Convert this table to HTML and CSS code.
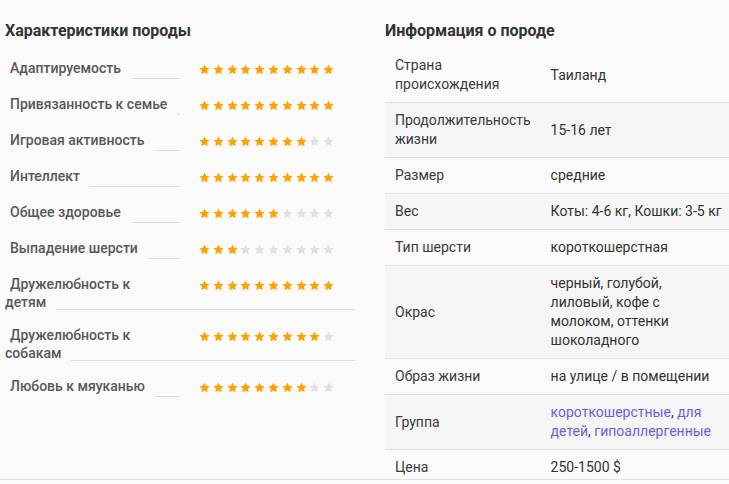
FILE: index.html
```html
<!DOCTYPE html>
<html lang="ru">
<head>
<meta charset="utf-8">
<link rel="stylesheet" href="styles.css">
</head>
<body>
<svg class="defs" width="0" height="0">
  <symbol id="star" viewBox="0 0 24 24"><path d="M12 .9l3.4 7.1 7.8 1-5.7 5.4 1.4 7.7L12 18.4l-6.9 3.7 1.4-7.7L.8 9l7.8-1z"/></symbol>
</svg>
<div class="page">
  <section class="traits">
    <h2 class="title">Характеристики породы</h2>
    <div class="row">
      <div class="stars"><svg class="on"><use href="#star"/></svg><svg class="on"><use href="#star"/></svg><svg class="on"><use href="#star"/></svg><svg class="on"><use href="#star"/></svg><svg class="on"><use href="#star"/></svg><svg class="on"><use href="#star"/></svg><svg class="on"><use href="#star"/></svg><svg class="on"><use href="#star"/></svg><svg class="on"><use href="#star"/></svg><svg class="on"><use href="#star"/></svg></div>
      <span class="name">Адаптируемость</span>
    </div>
    <div class="row">
      <div class="stars"><svg class="on"><use href="#star"/></svg><svg class="on"><use href="#star"/></svg><svg class="on"><use href="#star"/></svg><svg class="on"><use href="#star"/></svg><svg class="on"><use href="#star"/></svg><svg class="on"><use href="#star"/></svg><svg class="on"><use href="#star"/></svg><svg class="on"><use href="#star"/></svg><svg class="on"><use href="#star"/></svg><svg class="on"><use href="#star"/></svg></div>
      <span class="name">Привязанность к семье</span>
    </div>
    <div class="row">
      <div class="stars"><svg class="on"><use href="#star"/></svg><svg class="on"><use href="#star"/></svg><svg class="on"><use href="#star"/></svg><svg class="on"><use href="#star"/></svg><svg class="on"><use href="#star"/></svg><svg class="on"><use href="#star"/></svg><svg class="on"><use href="#star"/></svg><svg class="on"><use href="#star"/></svg><svg class="off"><use href="#star"/></svg><svg class="off"><use href="#star"/></svg></div>
      <span class="name">Игровая активность</span>
    </div>
    <div class="row">
      <div class="stars"><svg class="on"><use href="#star"/></svg><svg class="on"><use href="#star"/></svg><svg class="on"><use href="#star"/></svg><svg class="on"><use href="#star"/></svg><svg class="on"><use href="#star"/></svg><svg class="on"><use href="#star"/></svg><svg class="on"><use href="#star"/></svg><svg class="on"><use href="#star"/></svg><svg class="on"><use href="#star"/></svg><svg class="on"><use href="#star"/></svg></div>
      <span class="name">Интеллект</span>
    </div>
    <div class="row">
      <div class="stars"><svg class="on"><use href="#star"/></svg><svg class="on"><use href="#star"/></svg><svg class="on"><use href="#star"/></svg><svg class="on"><use href="#star"/></svg><svg class="on"><use href="#star"/></svg><svg class="on"><use href="#star"/></svg><svg class="off"><use href="#star"/></svg><svg class="off"><use href="#star"/></svg><svg class="off"><use href="#star"/></svg><svg class="off"><use href="#star"/></svg></div>
      <span class="name">Общее здоровье</span>
    </div>
    <div class="row">
      <div class="stars"><svg class="on"><use href="#star"/></svg><svg class="on"><use href="#star"/></svg><svg class="on"><use href="#star"/></svg><svg class="off"><use href="#star"/></svg><svg class="off"><use href="#star"/></svg><svg class="off"><use href="#star"/></svg><svg class="off"><use href="#star"/></svg><svg class="off"><use href="#star"/></svg><svg class="off"><use href="#star"/></svg><svg class="off"><use href="#star"/></svg></div>
      <span class="name">Выпадение шерсти</span>
    </div>
    <div class="row wrap">
      <div class="stars"><svg class="on"><use href="#star"/></svg><svg class="on"><use href="#star"/></svg><svg class="on"><use href="#star"/></svg><svg class="on"><use href="#star"/></svg><svg class="on"><use href="#star"/></svg><svg class="on"><use href="#star"/></svg><svg class="on"><use href="#star"/></svg><svg class="on"><use href="#star"/></svg><svg class="on"><use href="#star"/></svg><svg class="on"><use href="#star"/></svg></div>
      <span class="name">Дружелюбность к детям</span>
    </div>
    <div class="row wrap">
      <div class="stars"><svg class="on"><use href="#star"/></svg><svg class="on"><use href="#star"/></svg><svg class="on"><use href="#star"/></svg><svg class="on"><use href="#star"/></svg><svg class="on"><use href="#star"/></svg><svg class="on"><use href="#star"/></svg><svg class="on"><use href="#star"/></svg><svg class="on"><use href="#star"/></svg><svg class="on"><use href="#star"/></svg><svg class="off"><use href="#star"/></svg></div>
      <span class="name">Дружелюбность к собакам</span>
    </div>
    <div class="row">
      <div class="stars"><svg class="on"><use href="#star"/></svg><svg class="on"><use href="#star"/></svg><svg class="on"><use href="#star"/></svg><svg class="on"><use href="#star"/></svg><svg class="on"><use href="#star"/></svg><svg class="on"><use href="#star"/></svg><svg class="on"><use href="#star"/></svg><svg class="on"><use href="#star"/></svg><svg class="off"><use href="#star"/></svg><svg class="off"><use href="#star"/></svg></div>
      <span class="name">Любовь к мяуканью</span>
    </div>
  </section>
  <section class="info">
    <h2 class="title">Информация о породе</h2>
    <table class="table">
      <tr><td class="key">Страна происхождения</td><td class="val">Таиланд</td></tr>
      <tr class="alt"><td class="key">Продолжительность жизни</td><td class="val">15-16 лет</td></tr>
      <tr><td class="key">Размер</td><td class="val">средние</td></tr>
      <tr class="alt"><td class="key">Вес</td><td class="val nowrap">Коты: 4-6 кг, Кошки: 3-5 кг</td></tr>
      <tr><td class="key">Тип шерсти</td><td class="val">короткошерстная</td></tr>
      <tr class="alt"><td class="key">Окрас</td><td class="val">черный, голубой, лиловый, кофе с молоком, оттенки шоколадного</td></tr>
      <tr><td class="key">Образ жизни</td><td class="val">на улице / в помещении</td></tr>
      <tr class="alt"><td class="key">Группа</td><td class="val"><a class="link" href="#">короткошерстные</a>, <a class="link" href="#">для детей</a>, <a class="link" href="#">гипоаллергенные</a></td></tr>
      <tr><td class="key">Цена</td><td class="val">250-1500 $</td></tr>
    </table>
  </section>
</div>
</body>
</html>
```

FILE: styles.css
```css
html, body {
  margin: 0;
  padding: 0;
  background: #fafafa;
  overflow: hidden;
}
body {
  font-family: Roboto, "Noto Sans", sans-serif;
  color: #333;
}
.defs {
  position: absolute;
  width: 0;
  height: 0;
}
.page {
  display: flex;
  height: 479px;
  overflow: hidden;
  border-bottom: 1px solid #e2e2e4;
}
.traits {
  width: 350px;
  margin-left: 5px;
  flex: none;
}
.info {
  margin-left: 30px;
  flex: 1;
  min-width: 0;
}
.title {
  margin: 22px 0 0;
  font-size: 16px;
  line-height: 18px;
  font-weight: 700;
  color: #333;
}
.row {
  margin-top: 16px;
  padding-bottom: 1px;
  border-bottom: 1px solid #dedee2;
  font-size: 14px;
  line-height: 18px;
}
.traits .title + .row {
  margin-top: 19px;
}
.row.wrap {
  height: 34px;
  padding-bottom: 0;
}
.name {
  padding: 0 10px 6px 5px;
  background: #fafafa;
  font-weight: 500;
  color: #58585c;
}
.stars {
  float: right;
  width: 156px;
  height: 15px;
  padding: 5px 0 0 19px;
  background: #fafafa;
  display: flex;
  gap: 2.8px;
}
.stars svg {
  width: 11px;
  height: 11px;
  flex: none;
}
.stars .on { fill: #ffa200; }
.stars .off { fill: #e0e1e6; }
.table {
  margin-top: 8px;
  width: 344px;
  border-collapse: collapse;
  font-size: 14px;
  line-height: 19px;
}
.table td {
  padding: 8px 10px;
  border-bottom: 1px solid #e0e0e4;
  vertical-align: middle;
}
.table tr.alt td {
  background: #f5f5f5;
}
.key {
  width: 136px;
  color: #3a3a3e;
}
.val {
  color: #333;
}
.nowrap {
  white-space: nowrap;
}
.link {
  color: #6a62d8;
  text-decoration: none;
}
```
